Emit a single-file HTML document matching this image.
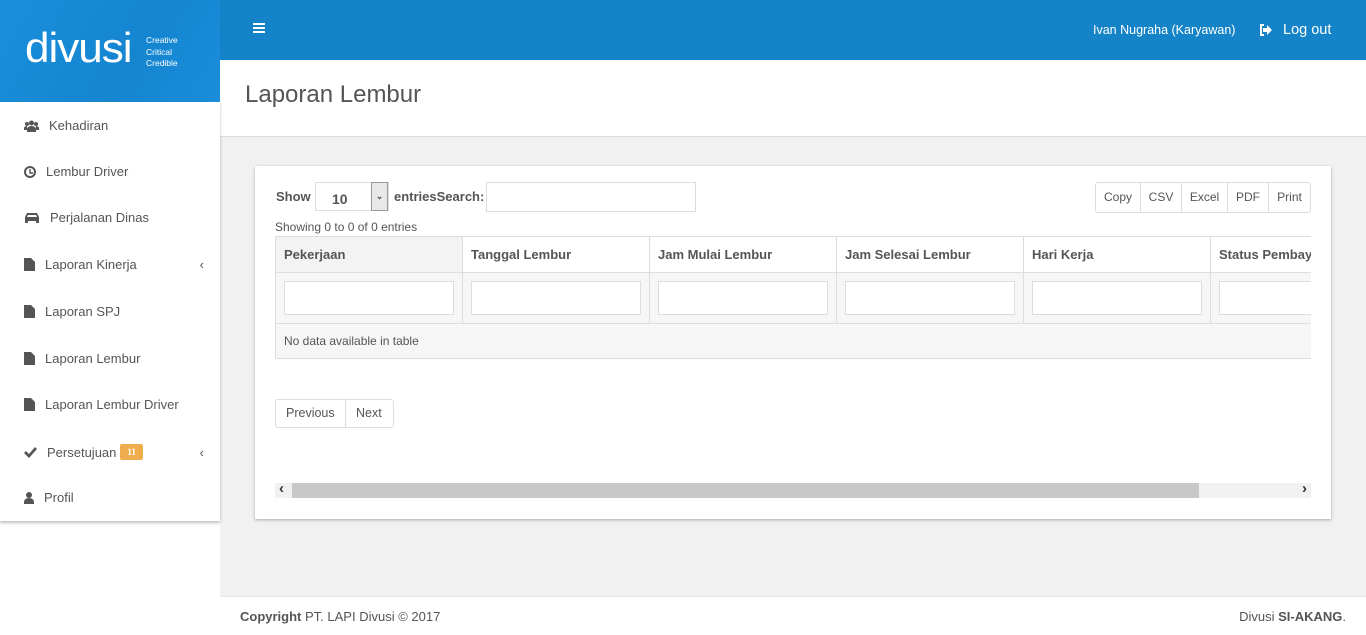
<!DOCTYPE html>
<html><head><meta charset="utf-8"><style>
*{box-sizing:border-box;margin:0;padding:0}
body{width:1366px;height:635px;overflow:hidden;background:#f1f1f1;font-family:"Liberation Sans",sans-serif;font-size:13px;color:#555;position:relative}
.top{position:absolute;left:0;top:0;width:1366px;height:60px;background:#1583c7;box-shadow:0 2px 3px rgba(0,0,0,.3)}
.logo{position:absolute;left:0;top:0;width:220px;height:102px;background:linear-gradient(120deg,#1a8fdc,#1585d0 60%,#1a8ddb);z-index:3}
.side{position:absolute;left:0;top:102px;width:220px;height:419px;background:#fff;box-shadow:0 2px 3px rgba(0,0,0,.25);z-index:2}
.side div{position:absolute;left:24px;font-size:13px;color:#555;display:flex;align-items:center}
.side svg{fill:#555;margin-right:10px}
.hdr{position:absolute;left:220px;top:60px;width:1146px;height:77px;background:#fff;border-bottom:1px solid #ddd}
.card{position:absolute;left:255px;top:166px;width:1076px;height:353px;background:#fff;box-shadow:0 1px 3px rgba(0,0,0,.3)}
.foot{position:absolute;left:220px;top:596px;width:1146px;height:39px;background:#fff;border-top:1px solid #e4e4e4;font-size:13px}
table{border-collapse:collapse;table-layout:fixed;width:1122px}
td{border:1px solid #ddd;width:187px;padding:0 8px;white-space:nowrap;overflow:hidden}
.btn{position:absolute;top:16px;height:31px;border:1px solid #ddd;font-size:12px;line-height:29px;text-align:center;color:#555}
</style></head><body>
<div style="position:absolute;left:0;top:520px;width:220px;height:115px;background:#fff"></div>
<div class="top">
<div style="position:absolute;left:253px;top:23px;width:12px;height:2px;background:#fff;box-shadow:0 4px #fff,0 8px #fff"></div>
<div style="position:absolute;left:1093px;top:23px;color:#fff;font-size:12.5px">Ivan Nugraha (Karyawan)</div>
<svg style="position:absolute;left:1259px;top:24px" width="13" height="12" viewBox="0 0 13 12"><path d="M5 1H2v10h3" fill="none" stroke="#fff" stroke-width="2"/><path d="M4 4h4V1l5 5-5 5V8H4z" fill="#fff"/></svg>
<div style="position:absolute;left:1283px;top:22px;color:#fff;font-size:14.5px">Log out</div>
</div>
<div class="logo">
<div style="position:absolute;left:25px;top:26px;color:#fff;font-size:42px;letter-spacing:-1px;line-height:44px;transform:scaleX(1.05);transform-origin:left">divusi</div>
<div style="position:absolute;left:146px;top:35px;color:#fff;font-size:8.5px;line-height:11.5px">Creative<br>Critical<br>Credible</div>
</div>
<div class="side">
<div style="top:16px"><svg width="15" height="12" viewBox="0 0 15 12"><circle cx="7.5" cy="3" r="2.5"/><circle cx="3" cy="4" r="2"/><circle cx="12" cy="4" r="2"/><path d="M3 12v-3a4.5 3 0 0 1 9 0v3zM0 10v-2a3 2 0 0 1 3-2v4zM15 10v-2a3 2 0 0 0-3-2v4z"/></svg>Kehadiran</div>
<div style="top:62px"><svg width="12" height="12" viewBox="0 0 12 12"><circle cx="6" cy="6" r="5" fill="none" stroke="#555" stroke-width="2"/><path d="M5.3 3h1.4v3.3H9v1.4H5.3z"/></svg>Lembur Driver</div>
<div style="top:108px"><svg width="16" height="12" viewBox="0 0 16 12"><path d="M3 1h10l2 4v6h-3V9H4v2H1V5zM4 3 3 5h10l-1-2z"/></svg>Perjalanan Dinas</div>
<div style="top:155px;width:180px"><svg width="11" height="13" viewBox="0 0 11 13"><path d="M0 0h7l4 4v9H0z"/></svg>Laporan Kinerja<span style="position:absolute;right:0">‹</span></div>
<div style="top:202px"><svg width="11" height="13" viewBox="0 0 11 13"><path d="M0 0h7l4 4v9H0z"/></svg>Laporan SPJ</div>
<div style="top:249px"><svg width="11" height="13" viewBox="0 0 11 13"><path d="M0 0h7l4 4v9H0z"/></svg>Laporan Lembur</div>
<div style="top:295px"><svg width="11" height="13" viewBox="0 0 11 13"><path d="M0 0h7l4 4v9H0z"/></svg>Laporan Lembur Driver</div>
<div style="top:342px;width:180px"><svg width="13" height="11" viewBox="0 0 13 11"><path d="M0 6l2-2 3 3 6-7 2 2-8 9z"/></svg>Persetujuan <span style="background:#f0ad4e;color:#fff;font-size:9px;font-weight:bold;padding:3px 7px;border-radius:2px;margin-left:4px;font-family:'Liberation Serif',serif">11</span><span style="position:absolute;right:0">‹</span></div>
<div style="top:388px"><svg width="10" height="12" viewBox="0 0 10 12"><circle cx="5" cy="3" r="3"/><path d="M0 12v-2a5 4 0 0 1 10 0v2z"/></svg>Profil</div>
</div>
<div class="hdr"><div style="position:absolute;left:25px;top:21px;font-size:24px;color:#555">Laporan Lembur</div></div>
<div class="card">
<div style="position:absolute;left:21px;top:23px;font-weight:bold">Show</div>
<div style="position:absolute;left:60px;top:16px;width:74px;height:29px;border:1px solid #ddd;font-weight:bold;padding:8px 0 0 16px;font-size:14px">10<div style="position:absolute;right:0;top:-1px;width:17px;height:29px;border:1px solid #999;background:#e8e8e8;font-size:9px;text-align:center;line-height:27px;padding:0">⌄</div></div>
<div style="position:absolute;left:139px;top:23px;font-weight:bold">entriesSearch:</div>
<div style="position:absolute;left:231px;top:16px;width:210px;height:30px;border:1px solid #ddd"></div>
<div class="btn" style="left:840px;width:46px;border-radius:3px 0 0 3px">Copy</div>
<div class="btn" style="left:885px;width:42px">CSV</div>
<div class="btn" style="left:926px;width:47px">Excel</div>
<div class="btn" style="left:972px;width:42px">PDF</div>
<div class="btn" style="left:1013px;width:43px;border-radius:0 3px 3px 0">Print</div>
<div style="position:absolute;left:20px;top:54px;font-size:12px">Showing 0 to 0 of 0 entries</div>
<div style="position:absolute;left:20px;top:70px;width:1036px;height:123px;overflow:hidden">
<table><tr style="height:36px;font-weight:bold;background:#fff"><td style="background:#f3f3f3">Pekerjaan</td><td>Tanggal Lembur</td><td>Jam Mulai Lembur</td><td>Jam Selesai Lembur</td><td>Hari Kerja</td><td>Status Pembayaran</td></tr>
<tr style="height:51px;background:#f6f6f6"><td><div style="height:34px;border:1px solid #ddd;background:#fff"></div></td><td><div style="height:34px;border:1px solid #ddd;background:#fff"></div></td><td><div style="height:34px;border:1px solid #ddd;background:#fff"></div></td><td><div style="height:34px;border:1px solid #ddd;background:#fff"></div></td><td><div style="height:34px;border:1px solid #ddd;background:#fff"></div></td><td><div style="height:34px;border:1px solid #ddd;background:#fff"></div></td></tr>
<tr style="height:35px;background:#f6f6f6"><td colspan="6" style="font-size:12px">No data available in table</td></tr></table></div>
<div style="position:absolute;left:20px;top:233px;width:119px;height:29px;border:1px solid #ddd;border-radius:3px;font-size:12.5px;line-height:27px"><span style="position:absolute;left:10px">Previous</span><span style="position:absolute;left:69px;top:0;height:27px;border-left:1px solid #ddd;padding-left:10px">Next</span></div>
<div style="position:absolute;left:20px;top:317px;width:1036px;height:15px;background:#f1f1f1"><div style="position:absolute;left:17px;top:0;width:907px;height:15px;background:#c8c8c8"></div><span style="position:absolute;left:4px;top:-3px;font-size:15px;font-weight:bold;color:#333">‹</span><span style="position:absolute;right:4px;top:-3px;font-size:15px;font-weight:bold;color:#333">›</span></div>
</div>
<div class="foot"><div style="position:absolute;left:20px;top:12px"><b>Copyright</b> PT. LAPI Divusi © 2017</div><div style="position:absolute;right:20px;top:12px">Divusi <b>SI-AKANG</b>.</div></div>
</body></html>
